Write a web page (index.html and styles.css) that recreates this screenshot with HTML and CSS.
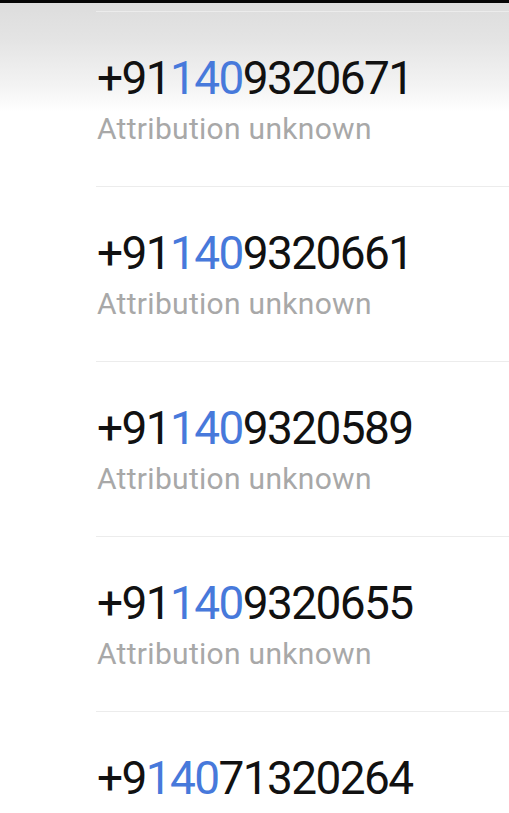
FILE: index.html
```html
<!DOCTYPE html>
<html lang="en">

<head>
    <meta charset="UTF-8" />
    <meta name="viewport" content="width=device-width, initial-scale=1.0" />
    <title>Search results</title>
    <link rel="stylesheet" href="styles.css">
</head>

<body>
    <div class="status-edge"></div>

    <!-- Number results -->
    <ul class="results">
        <li class="result">
            <div class="number">+91<span class="match">140</span>9320671</div>
            <div class="label">Attribution unknown</div>
        </li>
        <li class="result">
            <div class="number">+91<span class="match">140</span>9320661</div>
            <div class="label">Attribution unknown</div>
        </li>
        <li class="result">
            <div class="number">+91<span class="match">140</span>9320589</div>
            <div class="label">Attribution unknown</div>
        </li>
        <li class="result">
            <div class="number">+91<span class="match">140</span>9320655</div>
            <div class="label">Attribution unknown</div>
        </li>
        <li class="result">
            <div class="number">+9<span class="match">140</span>71320264</div>
            <div class="label">Attribution unknown</div>
        </li>
    </ul>
</body>

</html>
```

FILE: styles.css
```css
body {
    font-family: Roboto, "Noto Sans", sans-serif;
    margin: 0;
    padding: 0;
    height: 100vh;
    overflow: hidden;
    background: linear-gradient(to bottom, #dcdcdc 0px, #e4e4e4 40px, #f3f3f3 85px, #ffffff 112px) no-repeat;
}

.status-edge {
    height: 3px;
    background: #050505;
}

.results {
    list-style-type: none;
    margin: 0;
    padding: 8px 0 0 0;
}

.result {
    margin-left: 96px;
    padding: 39px 0 40px 1px;
    border-top: 1px solid #ececec;
}

.number {
    font-size: 46px;
    line-height: 54px;
    letter-spacing: -1.6px;
    color: #111111;
}

.number .match {
    color: #4779db;
}

.label {
    margin-top: 6px;
    font-size: 30px;
    line-height: 35px;
    letter-spacing: 0.3px;
    color: #a8a8a8;
}
```
